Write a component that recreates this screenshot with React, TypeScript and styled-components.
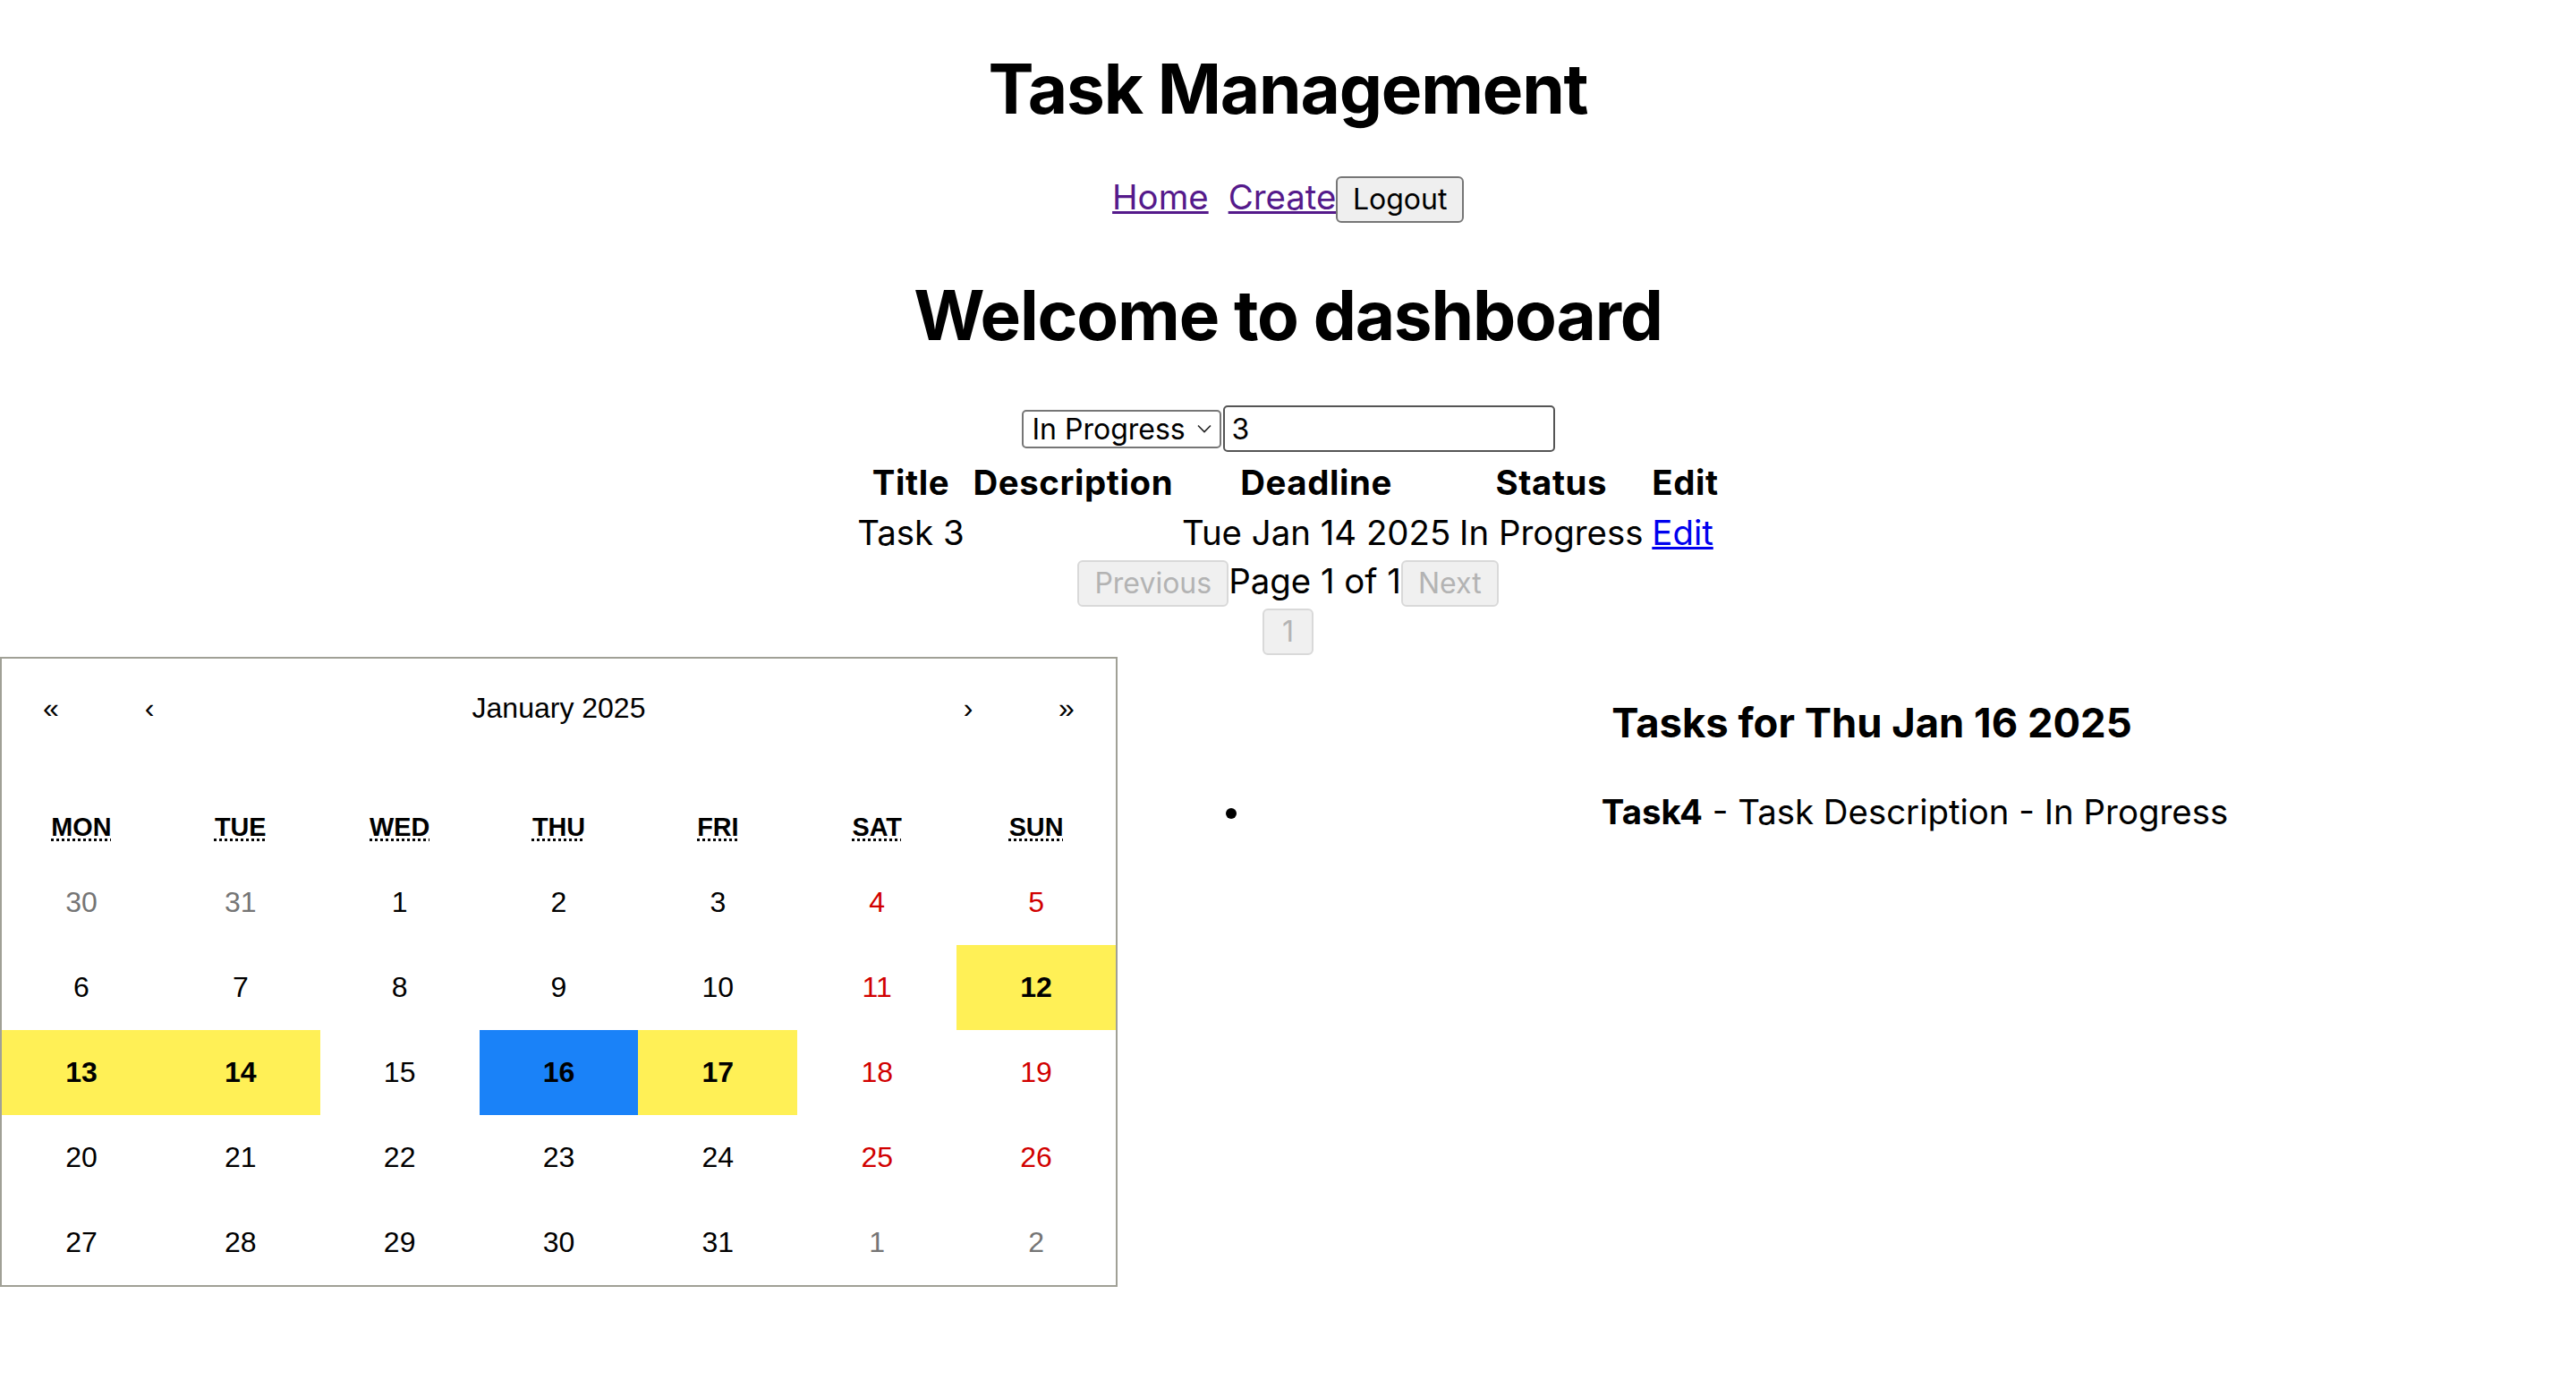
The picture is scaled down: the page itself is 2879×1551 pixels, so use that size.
import styled, { createGlobalStyle } from "styled-components";

const GlobalStyle = createGlobalStyle`
  html, body {
    margin: 0;
    padding: 0;
    background: #fff;
  }
  body {
    font-family: Inter, "Noto Sans", sans-serif;
    color: #000;
  }
`;

const Heading = styled.h1<{ $top: number; $bottom: number }>`
  margin: ${(p) => p.$top}px 0 ${(p) => p.$bottom}px;
  font-size: 76.5px;
  line-height: 94px;
  font-weight: 700;
  letter-spacing: -1.2px;
  text-align: center;
`;

const Nav = styled.nav`
  display: flex;
  justify-content: center;
  align-items: baseline;
  font-size: 38.4px;
  line-height: 46px;
`;

const NavLink = styled.a<{ $gap?: number }>`
  color: #551a8b;
  text-decoration: underline;
  margin-right: ${(p) => p.$gap ?? 0}px;
`;

const Button = styled.button<{ $off?: boolean; $pad?: number }>`
  font-family: inherit;
  font-size: 32px;
  line-height: 40px;
  padding: 4px ${(p) => p.$pad ?? 17}px;
  border-radius: 6px;
  border: 2px solid ${(p) => (p.$off ? "#d9d9d9" : "#767676")};
  background: ${(p) => (p.$off ? "#f0f0f0" : "#efefef")};
  color: ${(p) => (p.$off ? "#b3b3b3" : "#000")};
  cursor: ${(p) => (p.$off ? "default" : "pointer")};
`;

const Filters = styled.div`
  display: flex;
  justify-content: center;
  align-items: baseline;
  gap: 2px;
`;

const SelectWrap = styled.div`
  position: relative;
  display: inline-flex;
`;

const Select = styled.select`
  appearance: none;
  box-sizing: border-box;
  width: 223px;
  height: 43px;
  padding: 0 30px 0 10px;
  font-family: inherit;
  font-size: 32px;
  line-height: 39px;
  color: #000;
  background: #fff;
  border: 2px solid #767676;
  border-radius: 5px;
`;

const Chevron = styled.svg`
  position: absolute;
  right: 11px;
  top: 16px;
  pointer-events: none;
`;

const Search = styled.input`
  box-sizing: border-box;
  width: 371px;
  height: 52px;
  padding: 0 8px;
  font-family: inherit;
  font-size: 32px;
  color: #000;
  border: 2px solid #555;
  border-radius: 5px;
`;

const Table = styled.table`
  margin: 3.5px auto 0;
  border-spacing: 5px;
  font-size: 38.4px;
  line-height: 46.5px;
`;

const Th = styled.th`
  padding: 2.4px;
  font-weight: 700;
  letter-spacing: 0.6px;
`;

const Td = styled.td`
  padding: 2.4px;
  text-align: left;
`;

const EditLink = styled.a`
  color: #0000ee;
  text-decoration: underline;
`;

const Pager = styled.div<{ $top?: number }>`
  display: flex;
  justify-content: center;
  align-items: baseline;
  margin-top: ${(p) => p.$top ?? 0}px;
  font-size: 38.4px;
  line-height: 46px;
`;

const Board = styled.div`
  display: flex;
  align-items: flex-start;
  margin-top: 2px;
`;

const Calendar = styled.div`
  box-sizing: border-box;
  width: 1249px;
  flex: none;
  border: 2px solid #a0a096;
  background: #fff;
  font-family: "Liberation Sans", Arial, sans-serif;
`;

const CalNav = styled.div`
  display: flex;
  box-sizing: border-box;
  height: 108px;
  padding-top: 3px;
  margin-bottom: 36px;
`;

const NavButton = styled.button<{ $grow?: boolean }>`
  flex: ${(p) => (p.$grow ? "1 1 auto" : "none")};
  width: ${(p) => (p.$grow ? "auto" : "110px")};
  margin: 0;
  border: 0;
  padding: 0;
  background: none;
  font-family: inherit;
  font-size: 32px;
  color: #000;
`;

const Weekdays = styled.div`
  display: grid;
  grid-template-columns: repeat(7, 1fr);
  height: 81px;
  box-sizing: border-box;
  padding-top: 7px;
  line-height: 74px;
  text-align: center;
  text-transform: uppercase;
  font-size: 28.8px;
  font-weight: 700;
`;

const Abbr = styled.abbr`
  text-decoration: underline dotted;
  text-underline-offset: 3px;
`;

const Days = styled.div`
  display: grid;
  grid-template-columns: repeat(7, 1fr);
`;

type Tone = "plain" | "weekend" | "other" | "marked" | "active";

const toneBg: Record<Tone, string> = {
  plain: "none",
  weekend: "none",
  other: "none",
  marked: "#fff056",
  active: "#1a82f8",
};

const toneColor: Record<Tone, string> = {
  plain: "#000",
  weekend: "#d10000",
  other: "#757575",
  marked: "#000",
  active: "#000",
};

const Tile = styled.button<{ $tone: Tone }>`
  height: 95px;
  margin: 0;
  border: 0;
  padding: 0;
  font-family: inherit;
  font-size: 32px;
  font-weight: ${(p) => (p.$tone === "marked" || p.$tone === "active" ? 700 : 400)};
  background: ${(p) => toneBg[p.$tone]};
  color: ${(p) => toneColor[p.$tone]};
`;

const Side = styled.div`
  flex: 1;
  margin-left: 56px;
  text-align: center;
`;

const SideTitle = styled.h3`
  margin: 47px 0 49px;
  font-size: 45.4px;
  line-height: 54px;
  font-weight: 700;
`;

const List = styled.ul`
  margin: 0;
  padding-left: 96px;
  font-size: 38.4px;
  line-height: 46.5px;
`;

const weekdays = [
  ["Mon", "Monday"],
  ["Tue", "Tuesday"],
  ["Wed", "Wednesday"],
  ["Thu", "Thursday"],
  ["Fri", "Friday"],
  ["Sat", "Saturday"],
  ["Sun", "Sunday"],
];

const marked = [12, 13, 14, 17];

function buildDays() {
  const cells: { label: number; tone: Tone }[] = [];
  [30, 31].forEach((d) => cells.push({ label: d, tone: "other" }));
  for (let d = 1; d <= 31; d++) {
    const col = (d + 1) % 7; // Jan 1 2025 is a Wednesday -> column 2
    let tone: Tone = col >= 5 ? "weekend" : "plain";
    if (marked.includes(d)) tone = "marked";
    if (d === 16) tone = "active";
    cells.push({ label: d, tone });
  }
  [1, 2].forEach((d) => cells.push({ label: d, tone: "other" }));
  return cells;
}

export default function App() {
  const days = buildDays();

  return (
    <>
      <GlobalStyle />
      <Heading $top={52} $bottom={51}>Task Management</Heading>
      <Nav>
        <NavLink href="#" $gap={22}>Home</NavLink>
        <NavLink href="#">Create</NavLink>
        <Button $pad={16.5}>Logout</Button>
      </Nav>
      <Heading $top={56} $bottom={54}>Welcome to dashboard</Heading>

      <Filters>
        <SelectWrap>
          <Select defaultValue="In Progress">
            <option>All</option>
            <option>To Do</option>
            <option>In Progress</option>
            <option>Completed</option>
          </Select>
          <Chevron width="16" height="10" viewBox="0 0 16 10">
            <polyline points="1,1.5 8,8.5 15,1.5" fill="none" stroke="#222" strokeWidth="1.6" />
          </Chevron>
        </SelectWrap>
        <Search defaultValue="3" />
      </Filters>

      <Table>
        <thead>
          <tr>
            <Th>Title</Th>
            <Th>Description</Th>
            <Th>Deadline</Th>
            <Th>Status</Th>
            <Th>Edit</Th>
          </tr>
        </thead>
        <tbody>
          <tr>
            <Td>Task 3</Td>
            <Td></Td>
            <Td>Tue Jan 14 2025</Td>
            <Td>In Progress</Td>
            <Td>
              <EditLink href="#">Edit</EditLink>
            </Td>
          </tr>
        </tbody>
      </Table>

      <Pager>
        <Button $off disabled>Previous</Button>
        <span>Page 1 of 1</span>
        <Button $off disabled>Next</Button>
      </Pager>
      <Pager $top={2}>
        <Button $off disabled $pad={20}>1</Button>
      </Pager>

      <Board>
        <Calendar>
          <CalNav>
            <NavButton>«</NavButton>
            <NavButton>‹</NavButton>
            <NavButton $grow>January 2025</NavButton>
            <NavButton>›</NavButton>
            <NavButton>»</NavButton>
          </CalNav>
          <Weekdays>
            {weekdays.map(([short, full]) => (
              <div key={short}>
                <Abbr title={full}>{short}</Abbr>
              </div>
            ))}
          </Weekdays>
          <Days>
            {days.map((d, i) => (
              <Tile key={i} $tone={d.tone}>
                {d.label}
              </Tile>
            ))}
          </Days>
        </Calendar>

        <Side>
          <SideTitle>Tasks for Thu Jan 16 2025</SideTitle>
          <List>
            <li>
              <strong>Task4</strong> - Task Description - In Progress
            </li>
          </List>
        </Side>
      </Board>
    </>
  );
}
